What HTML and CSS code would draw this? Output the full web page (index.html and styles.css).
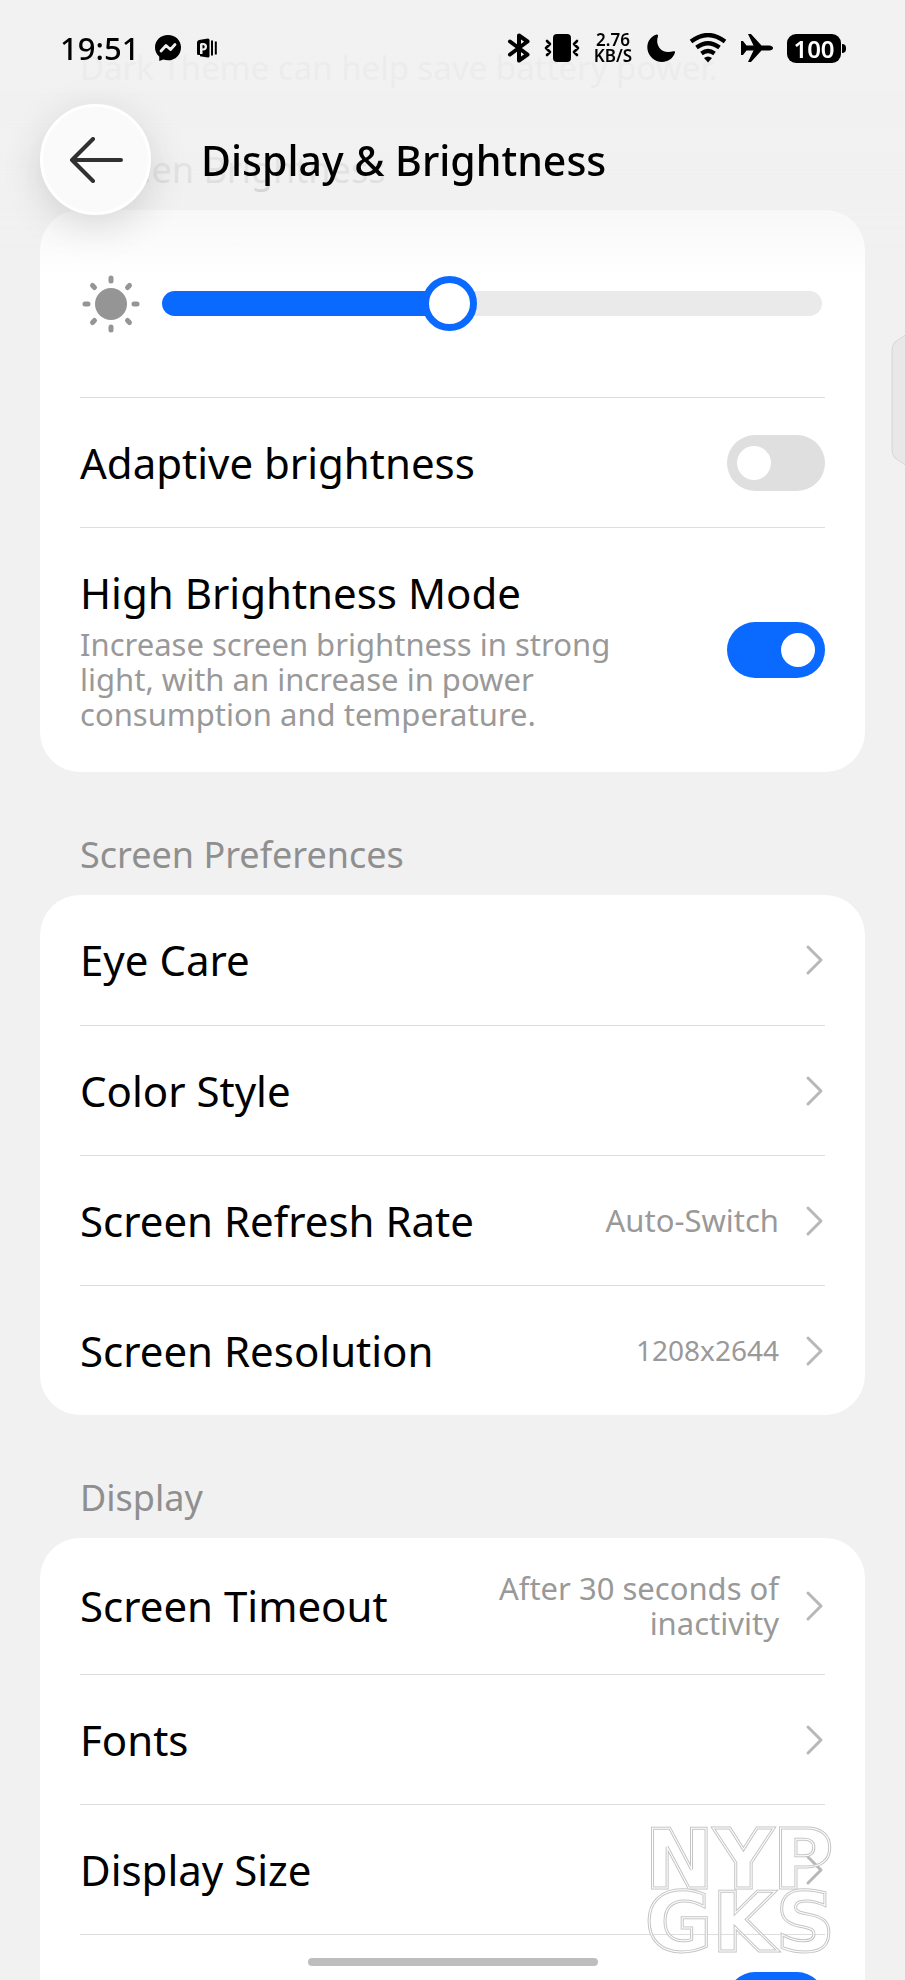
FILE: index.html
```
<!DOCTYPE html>
<html lang="en">
<head>
    <meta charset="UTF-8">
    <meta name="viewport" content="width=device-width, initial-scale=1.0">
    <title>Display &amp; Brightness</title>
    <link rel="stylesheet" href="styles.css">
</head>
<body>
    <!-- Shared icons -->
    <svg class="defs" width="0" height="0" aria-hidden="true">
        <symbol id="chevron" viewBox="0 0 20 32">
            <path d="M3 3 L16 16 L3 29" fill="none" stroke="#b8b8b8" stroke-width="3" stroke-linecap="round" stroke-linejoin="round"/>
        </symbol>
    </svg>

    <header class="top">
        <div class="status-bar">
            <div class="status-left">
                <span class="time">19:51</span>
                <svg class="messenger" width="28" height="28" viewBox="0 0 28 28" aria-hidden="true">
                    <path d="M14 1C6.500 1 1 6.400 1 13.400c0 3.700 1.600 6.800 4.200 9L5.300 27l4-1.500c1.500.5 3 .8 4.700.8 7.500 0 13-5.900 13-12.900S21.500 1 14 1z"/>
                    <path d="M7 17l5-5.500 4.500 4 4.500-5" fill="none" stroke="#f1f1f1" stroke-width="2.800" stroke-linecap="round" stroke-linejoin="round"/>
                </svg>
                <svg class="docs" width="20" height="20" viewBox="0 0 20 20" aria-hidden="true">
                    <path d="M2 2L11 .5q1.500 0 1.500 1.500v16q0 1.500-1.500 1.500L3 18.200V17H1.500Q0 17 0 15.500V4.500Q0 2.500 2 2z"/>
                    <path d="M3 16V6.500q0-1.500 1.500-1.500H6q4 0 4 3.700T6 12.500h-.5V16z" fill="#f1f1f1"/>
                    <path d="M5.500 7H6q1.700 0 1.700 1.700T6 10.500h-.5z"/>
                    <path d="M15 2.500v15M18.800 3.500v13" stroke="#000" stroke-width="2"/>
                </svg>
            </div>
            <div class="status-right">
                <svg width="24" height="30" viewBox="0 0 24 30" aria-hidden="true">
                    <path d="M3 8.500l17.500 13L12 27.500v-25l8.500 6L3 21.500" fill="none" stroke="#000" stroke-width="4" stroke-linecap="round" stroke-linejoin="round"/>
                </svg>
                <svg width="36" height="30" viewBox="0 0 36 30" aria-hidden="true">
                    <rect x="9" y="1" width="18" height="28" rx="4"/>
                    <path d="M3 8l3 3-4 4 4 4-3 3M33 8l-3 3 4 4-4 4 3 3" fill="none" stroke="#000" stroke-width="2.600" stroke-linecap="round" stroke-linejoin="round"/>
                </svg>
                <span class="speed">2.76<br>KB/S</span>
                <svg width="30" height="30" viewBox="0 0 30 30" aria-hidden="true">
                    <path d="M10.500 1.500C3.500 4 .5 10 1.500 16.500S8.500 29 16 29c6 0 11-3.500 13-9.500.3-1-.5-1.500-1.500-1.200-6 1.700-11 .7-14-3.300-2.500-3.500-3-7.500-1.500-12 .4-1-.5-1.900-1.500-1.500z"/>
                </svg>
                <svg width="38" height="30" viewBox="0 0 38 30" aria-hidden="true">
                    <path d="M2 8.500Q19-4.500 36 8.500M7.500 14.500q11.500-8.500 23 0M12.500 20.500q6.500-5 13 0" fill="none" stroke="#000" stroke-width="4.200"/>
                    <path d="M15 25q4-3 8 0l-4 4.500z"/>
                </svg>
                <svg width="34" height="30" viewBox="0 0 34 30" aria-hidden="true">
                    <path d="M1 8h2l3.500 4.500h7L8 1h3l10.500 11.500H29q4 .5 4 2.500t-4 2.500h-7.500L11 29H8l5.500-11.500h-7L3 22H1z"/>
                </svg>
                <span class="battery">100</span>
            </div>
        </div>
        <div class="title-bar">
            <button class="back" type="button" aria-label="Back">
                <svg width="54" height="46" viewBox="0 0 54 46" aria-hidden="true">
                    <path d="M52 23H4M24 2L3 23l21 21" fill="none" stroke="#303030" stroke-width="4" stroke-linecap="round" stroke-linejoin="round"/>
                </svg>
            </button>
            <h1>Display &amp; Brightness</h1>
        </div>
    </header>

    <main class="settings">
        <p class="note">Dark Theme can help save battery power.</p>

        <h2>Screen Brightness</h2>
        <section class="card">
            <div class="row row-slider">
                <svg width="58" height="58" viewBox="0 0 58 58" aria-hidden="true">
                    <circle cx="29" cy="29" r="16" fill="#959595"/>
                    <path d="M29 3v3M29 52v3M3 29h3M52 29h3M10.500 10.500l2 2M45.500 45.500l2 2M10.500 47.500l2-2M45.500 12.500l2-2" fill="none" stroke="#959595" stroke-width="5" stroke-linecap="round"/>
                </svg>
                <input class="slider" type="range" min="0" max="1000" value="430" aria-label="Screen brightness">
            </div>
            <div class="row">
                <label for="adaptive">Adaptive brightness</label>
                <input class="toggle" type="checkbox" id="adaptive">
            </div>
            <div class="row row-tall">
                <div class="text">
                    <label for="high-brightness">High Brightness Mode</label>
                    <p>Increase screen brightness in strong light, with an increase in power consumption and temperature.</p>
                </div>
                <input class="toggle" type="checkbox" id="high-brightness" checked>
            </div>
        </section>

        <h2>Screen Preferences</h2>
        <section class="card">
            <a class="row" href="#eye-care">Eye Care <svg class="chevron"><use href="#chevron"/></svg></a>
            <a class="row" href="#color-style">Color Style <svg class="chevron"><use href="#chevron"/></svg></a>
            <a class="row" href="#refresh-rate">Screen Refresh Rate <span class="value">Auto-Switch</span><svg class="chevron"><use href="#chevron"/></svg></a>
            <a class="row" href="#resolution">Screen Resolution <span class="value number">1208x2644</span><svg class="chevron"><use href="#chevron"/></svg></a>
        </section>

        <h2>Display</h2>
        <section class="card">
            <a class="row row-timeout" href="#timeout">Screen Timeout <span class="value">After 30 seconds of inactivity</span><svg class="chevron"><use href="#chevron"/></svg></a>
            <a class="row" href="#fonts">Fonts <svg class="chevron"><use href="#chevron"/></svg></a>
            <a class="row" href="#display-size">Display Size <svg class="chevron"><use href="#chevron"/></svg></a>
            <div class="row">
                <input class="toggle" type="checkbox" aria-label="Full screen display" checked>
            </div>
        </section>
    </main>

    <!-- Edge panel handle -->
    <svg class="edge" width="14" height="132" viewBox="0 0 14 132" aria-hidden="true">
        <path d="M16 0L4 8Q1 11 1 16V116q0 5 3 8l12 8" fill="#e8e8e8" stroke="#d6d6d6"/>
    </svg>

    <svg class="watermark" width="228" height="172" viewBox="0 0 228 172" role="img" aria-label="NYP GKS">
        <g class="outline">
            <g id="mark">
                <text x="0" y="80">NYP</text>
                <text x="0" y="143">GKS</text>
            </g>
        </g>
        <use class="inline" href="#mark"/>
    </svg>
    <div class="home-bar"></div>
</body>
</html>
```
FILE: styles.css
```
* {
    box-sizing: border-box;
}
body {
    margin: 0;
    height: 100vh;
    overflow: hidden;
    background: #f1f1f1;
    color: #000;
    font-family: "Noto Sans", sans-serif;
    font-size: 42px;
    line-height: 50px;
}
.defs {
    position: absolute;
}

.top {
    position: fixed;
    top: 0;
    left: 0;
    right: 0;
    height: 280px;
    padding: 0 40px;
    background: linear-gradient(rgba(241, 241, 241, 0.95) 80px, rgba(241, 241, 241, 0.84) 180px, rgba(241, 241, 241, 0.5) 212px, rgba(241, 241, 241, 0));
    pointer-events: none;
    z-index: 1;
}
.status-bar {
    display: flex;
    justify-content: space-between;
    align-items: center;
    height: 96px;
    padding: 0 24px 0 20px;
}
.status-left,
.status-right {
    display: flex;
    align-items: center;
}
.time {
    font-size: 31px;
    font-weight: 500;
}
.messenger,
.docs {
    margin-left: 15px;
}
.status-right {
    gap: 13px;
}
.speed {
    width: 40px;
    font-size: 17px;
    font-weight: 600;
    line-height: 16px;
    text-align: center;
}
.battery {
    position: relative;
    width: 54px;
    border-radius: 9px;
    background: #000;
    color: #fff;
    font-size: 24px;
    font-weight: 600;
    line-height: 29px;
    text-align: center;
}
.battery::after {
    content: "";
    position: absolute;
    left: 55px;
    top: 10px;
    width: 4px;
    height: 9px;
    border-radius: 0 4px 4px 0;
    background: #000;
}
.title-bar {
    display: flex;
    align-items: center;
    gap: 50px;
    padding-top: 8px;
}
.back {
    display: flex;
    align-items: center;
    justify-content: center;
    width: 111px;
    height: 111px;
    padding: 0;
    border: 3px solid #fff;
    border-radius: 50%;
    background: #fafafa;
    box-shadow: 0 10px 40px rgba(0, 0, 0, 0.14);
    cursor: pointer;
    pointer-events: auto;
}
h1 {
    margin: 0;
    font-size: 41px;
    font-weight: 500;
}

.settings {
    padding: 49px 40px 0;
}
.note {
    margin: 0 40px;
    color: #8f8f8f;
    font-size: 33px;
    line-height: 38px;
}
h2 {
    margin: 0;
    padding: 58px 40px 15px;
    color: #8f8f8f;
    font-size: 36px;
    font-weight: 400;
    line-height: 50px;
}
.card {
    padding: 0 40px;
    border-radius: 40px;
    background: #fff;
}
.row {
    display: flex;
    align-items: center;
    justify-content: space-between;
    min-height: 130px;
    color: #000;
    text-decoration: none;
}
.row + .row {
    border-top: 1px solid #dedede;
}
.row-slider {
    min-height: 187px;
    gap: 22px;
    padding: 0 3px 0 2px;
}
.row-tall {
    padding: 40px 0;
}
.row-timeout {
    min-height: 136px;
}
.text {
    width: 560px;
}
.text p {
    margin: 9px 0 0;
    color: #999;
    font-size: 31px;
    line-height: 35px;
}
.value {
    max-width: 300px;
    margin: 0 26px 0 auto;
    color: #999;
    font-size: 31px;
    line-height: 35px;
    text-align: right;
}
.number {
    font-size: 28px;
}
.chevron {
    flex: none;
    width: 20px;
    height: 32px;
}

.toggle {
    appearance: none;
    flex: none;
    width: 98px;
    height: 56px;
    margin: 0 0 0 auto;
    padding: 11px 10px;
    border-radius: 28px;
    background: #dfdfdf;
    cursor: pointer;
}
.toggle::before {
    content: "";
    display: block;
    width: 34px;
    height: 34px;
    border-radius: 50%;
    background: #fff;
}
.toggle:checked {
    background: #0a69ff;
}
.toggle:checked::before {
    margin-left: auto;
}

.slider {
    appearance: none;
    flex: 1;
    height: 55px;
    margin: 0;
    background: none;
}
.slider::-webkit-slider-runnable-track {
    height: 25px;
    border-radius: 13px;
    background: linear-gradient(to right, #0a69ff 43%, #eaeaea 43%);
}
.slider::-webkit-slider-thumb {
    appearance: none;
    width: 55px;
    height: 55px;
    margin-top: -15px;
    border: 7px solid #0a69ff;
    border-radius: 50%;
    background: #fff;
}

.edge {
    position: fixed;
    top: 334px;
    right: 0;
}
.watermark {
    position: fixed;
    right: 32px;
    bottom: 0;
    font-family: "DejaVu Sans", sans-serif;
    font-size: 82px;
    font-weight: 700;
    fill: none;
}
.outline {
    stroke: #c4c4c4;
    stroke-width: 3px;
}
.inline {
    stroke: #fff;
    stroke-width: 1px;
}
.home-bar {
    position: fixed;
    left: 50%;
    bottom: 14px;
    width: 290px;
    height: 8px;
    margin-left: -145px;
    border-radius: 4px;
    background: #bebebe;
}
```
